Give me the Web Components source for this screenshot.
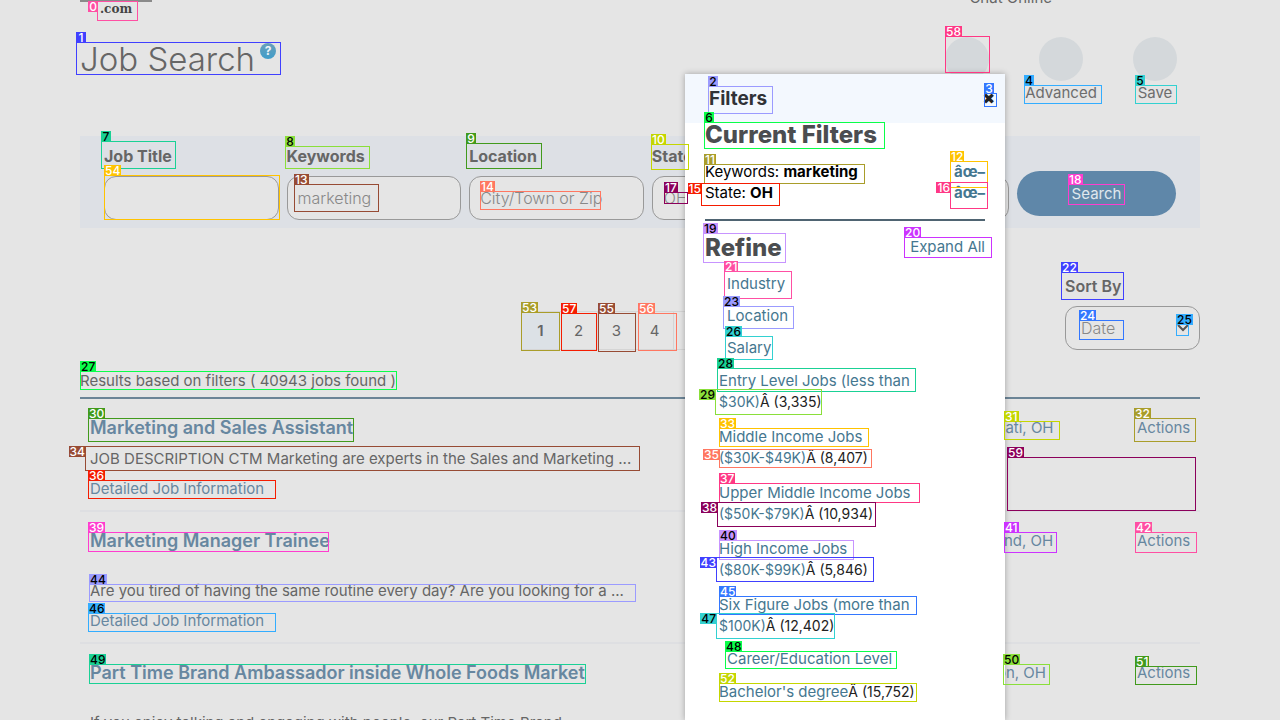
<!DOCTYPE html>
<html lang="en">
<head>
<meta charset="utf-8">
<title>Job Search</title>
<style>
body { margin: 0; background: #e5e5e5; font-family: Inter, "Open Sans", sans-serif; font-size: 14px; line-height: 20px; color: #666; }
</style>
</head>
<body>
<job-page>
  <site-top></site-top>
  <page-title>
    <action-link></action-link>
    <action-link>Advanced</action-link>
    <action-link>Save</action-link>
  </page-title>
  <search-panel></search-panel>
  <results-toolbar></results-toolbar>
  <job-results></job-results>
  <filter-drawer slot="overlay"></filter-drawer>
  <mark-layer slot="overlay" aria-hidden="true"></mark-layer>
</job-page>
<script>
const define = (name, html, setup) => {
  const template = document.createElement('template');
  template.innerHTML = html;
  customElements.define(name, class extends HTMLElement {
    constructor() {
      super();
      const root = this.attachShadow({ mode: 'open' });
      root.append(template.content.cloneNode(true));
      if (setup) setup(root);
    }
  });
};

define('job-page', `
<style>
:host { display: block; position: relative; height: 100vh; overflow: hidden; }
main { max-width: 1120px; margin: 0 auto; }
</style>
<main><slot></slot></main>
<slot name="overlay"></slot>`);

define('site-top', `
<style>
:host { display: flex; justify-content: space-between; align-items: flex-start; height: 37px; }
.logo { width: 72px; border-top: 2px solid #8a8a8a; text-align: center; color: #444; text-decoration: none; font: bold 12px/14px "DejaVu Serif", serif; }
.chat { color: #666; text-decoration: none; font-size: 15px; margin: -12px 148px 0 0; }
</style>
<a class="logo" href="#">.com</a>
<a class="chat" href="#">Chat Online</a>`);

define('page-title', `
<style>
:host { display: flex; justify-content: space-between; height: 99px; }
h1 { display: flex; align-items: flex-start; gap: 5px; margin: 0; height: 44px; font-size: 33px; font-weight: 300; line-height: 44px; color: #666; }
button { width: 16px; height: 16px; margin-top: 6px; padding: 0; border: 0; border-radius: 50%; background: linear-gradient(#6a9fb8, #3f9dcb); color: #eef4f8; font: bold 12px/16px Inter, sans-serif; }
nav { display: flex; }
</style>
<h1>Job Search<button type="button" aria-label="Help">?</button></h1>
<nav><slot></slot></nav>`);

define('action-link', `
<style>
:host { display: block; width: 94px; }
:host(:last-child) { margin-right: -2px; }
a { display: flex; flex-direction: column; align-items: center; gap: 2px; color: #6d6d6d; text-decoration: none; font-size: 15px; }
i { width: 44px; height: 44px; border-radius: 50%; background: #d4d8db; }
</style>
<a href="#"><i></i><slot></slot></a>`);

define('select-box', `
<style>
:host { display: block; }
label { display: block; color: #666; font-size: 16px; font-weight: 700; line-height: 24px; margin-bottom: 8px; }
div { display: grid; align-items: center; }
select, svg { grid-area: 1 / 1; }
select { appearance: none; box-sizing: border-box; width: 100%; height: 44px; padding: 0 11px; border: 1px solid #999; border-radius: 12px; background: #e5e5e5; color: #888; font: 300 16px Inter, sans-serif; }
:host([wide]) select { padding: 0 15px; }
:host([wide]) label { font-weight: 600; }
svg { justify-self: end; margin-right: 11px; pointer-events: none; }
</style>
<label for="choice"></label>
<div><select id="choice"></select>
<svg width="12" height="8" viewBox="0 0 12 8" fill="none" stroke="#555" stroke-width="2"><path d="M1 1l5 5 5-5"/></svg></div>`,
(root) => {
  const host = root.host;
  queueMicrotask(() => {
    root.querySelector('select').add(new Option(host.getAttribute('value')));
    root.querySelector('label').textContent = host.getAttribute('label');
  });
});

define('search-panel', `
<style>
:host { display: block; background: #dde0e5; }
form { display: grid; grid-template-columns: repeat(5, minmax(0, 1fr)) 159px; gap: 8px; align-items: end; padding: 8px 24px; }
label { display: block; color: #666; font-size: 16px; font-weight: 700; line-height: 24px; margin-bottom: 8px; }
input { box-sizing: border-box; width: 100%; height: 44px; display: block; padding: 0 10px; border: 1px solid #999; border-radius: 12px; background: #e5e5e5; color: #888; font: 300 16px Inter, sans-serif; }
input::placeholder { color: #888; }
button { height: 45px; margin-bottom: 4px; border: 0; border-radius: 23px; background: #5f87a9; color: #e0e8ee; font: 15px Inter, sans-serif; }
</style>
<form>
  <div><label for="title">Job Title</label><input id="title"></div>
  <div><label for="keys">Keywords</label><input id="keys" value="marketing"></div>
  <div><label for="place">Location</label><input id="place" placeholder="City/Town or Zip"></div>
  <select-box label="State" value="OH"></select-box>
  <select-box label="Radius" value="25"></select-box>
  <button type="button">Search</button>
</form>`);

define('results-toolbar', `
<style>
:host { display: block; padding-top: 46px; }
.bar { display: grid; grid-template-columns: 1fr auto 1fr; align-items: end; }
nav { grid-column: 2; display: flex; border: 1px solid #d5d5d5; box-sizing: border-box; height: 39px; }
nav a { box-sizing: border-box; width: 38px; border-right: 1px solid #d5d5d5; color: #666; font-size: 15px; line-height: 37px; text-align: center; text-decoration: none; }
nav a:last-child { border: 0; width: 46px; }
nav a[aria-current] { background: #dce1e6; font-weight: 600; }
select-box { justify-self: end; width: 135px; }
p { margin: 21px 0 6px; font-size: 15px; line-height: 20px; }
</style>
<div class="bar">
  <nav><a href="#" aria-current="page">1</a><a href="#">2</a><a href="#">3</a><a href="#">4</a><a href="#">5</a><a href="#">›</a></nav>
  <select-box wide label="Sort By" value="Date"></select-box>
</div>
<p>Results based on filters ( 40943 jobs found )</p>`);

const jobs = [
  ['Marketing and Sales Assistant', 'CTM', 'Cincinnati, OH', 'JOB DESCRIPTION CTM Marketing are experts in the Sales and Marketing ...'],
  ['Marketing Manager Trainee', 'Ohio<br>Group', 'Cleveland, OH', 'Are you tired of having the same routine every day? Are you looking for a ...'],
  ['Part Time Brand Ambassador inside Whole Foods Market', 'Whole<br>Foods', 'Hamilton, OH', 'If you enjoy talking and engaging with people, our Part Time Brand ...'],
];
define('job-results', `
<style>
:host { display: block; border-top: 2px solid #6b8496; }
table { width: 100%; border-collapse: collapse; table-layout: fixed; font-size: 15px; line-height: 20px; }
col.company { width: 144px; } col.place { width: 185px; } col.act { width: 73px; }
tbody { border-bottom: 2px solid #dedfe2; }
td { padding: 19px 0 0 10px; vertical-align: top; white-space: nowrap; }
.more td { padding: 10px 10px 11px; }
a { color: #6787a0; text-decoration: none; }
.title { font-size: 18px; font-weight: 600; }
p { margin: 0 0 10px; }
</style>
<table><colgroup><col><col class="company"><col class="place"><col class="act"></colgroup></table>`,
(root) => {
  root.querySelector('table').insertAdjacentHTML('beforeend', jobs.map(([title, company, place, text]) => `
<tbody><tr><td><a class="title" href="#">${title}</a></td><td>${company}</td><td><a href="#">${place}</a></td><td><a href="#">Actions</a></td></tr>
<tr class="more"><td colspan="4"><p>${text}</p><a href="#">Detailed Job Information</a></td></tr></tbody>`).join(''));
});

define('filter-drawer', `
<style>
:host { display: block; position: absolute; left: calc(50% + 45px); top: 74px; bottom: 0; width: 320px; background: #fff; box-shadow: 0 0 6px rgba(0,0,0,.3); color: #222; font-size: 15px; line-height: 21px; }
header { display: flex; justify-content: space-between; align-items: center; height: 49px; padding: 0 10px 0 24px; background: #f3f8fe; }
header button { padding: 0; border: 0; background: none; color: #222; font: bold 15px/16px "DejaVu Sans", sans-serif; }
h2 { margin: 0; font-size: 24px; font-weight: 800; line-height: 24px; color: #4b4d50; }
header h2 { color: #303236; font-size: 19px; font-weight: 700; }
.body { padding: 0 20px; }
.row { display: flex; justify-content: space-between; color: #000; }
.current { margin: 14px 0 16px; }
a { color: #457790; text-decoration: none; }
.row a { font-weight: 700; }
hr { margin: 0; border: 0; border-top: 2px solid #4f6472; }
.refine { display: flex; justify-content: space-between; align-items: flex-start; padding: 15px 0 8px; height: 24px; }
.group { display: block; padding-left: 22px; line-height: 32px; }
ul { list-style: none; margin: 6px 0 7px; padding: 0 66px 0 14px; display: grid; gap: 14px; white-space: nowrap; }
small { font-size: 14px; }
</style>
<header><h2>Filters</h2><button type="button" aria-label="Close">✖</button></header>
<div class="body">
  <h2>Current Filters</h2>
  <div class="current">
    <div class="row"><span>Keywords: <b>marketing</b></span><a href="#">âœ–</a></div>
    <div class="row"><span>State: <b>OH</b></span><a href="#">âœ–</a></div>
  </div>
  <hr>
  <div class="refine"><h2>Refine</h2><a href="#">Expand All</a></div>
  <a class="group" href="#">Industry</a>
  <a class="group" href="#">Location</a>
  <a class="group" href="#">Salary</a>
  <ul>
    <li><a href="#">Entry Level Jobs (less than<br><small>$30K)</small></a><small>Â (3,335)</small></li>
    <li><a href="#">Middle Income Jobs<br><small>($30K-$49K)</small></a><small>Â (8,407)</small></li>
    <li><a href="#">Upper Middle Income Jobs<br><small>($50K-$79K)</small></a><small>Â (10,934)</small></li>
    <li><a href="#">High Income Jobs<br><small>($80K-$99K)</small></a><small>Â (5,846)</small></li>
    <li><a href="#">Six Figure Jobs (more than<br><small>$100K)</small></a><small>Â (12,402)</small></li>
  </ul>
  <a class="group" href="#">Career/Education Level</a>
  <ul><li><a href="#">Bachelor's degree</a><small>Â (15,752)</small></li></ul>
</div>`);

// Each mark: left, top, width, height and, when 1, a tag at the left side of the box.
const marks = [
  [97,1,41,20,1],[76,42,205,33],[708,86,65,28],[984,93,13,14],[1024,85,78,19],[1135,85,42,19],
  [704,122,181,27],[101,141,75,28],[285,146,85,23],[466,143,76,26],[651,144,38,26],[704,164,161,20],
  [950,161,38,27],[294,184,85,28],[480,191,121,19],[701,183,79,23,1],[950,182,38,27,1],[664,192,24,12],
  [1068,184,57,21],[703,233,83,30],[904,237,88,21],[724,271,68,28],[1061,272,63,28],[723,306,71,23],
  [1079,320,45,20],[1176,324,13,12],[725,336,48,24],[80,371,317,19],[717,368,199,24],[715,389,107,26,1],
  [88,418,266,24],[1004,421,56,19],[1134,418,62,24],[719,428,150,19],[85,446,555,25,1],[719,449,153,19,1],
  [88,480,188,19],[719,483,201,20],[717,502,159,25,1],[88,532,241,20],[719,540,135,20],[1004,532,53,21],
  [1135,532,62,21],[716,557,158,25,1],[89,584,547,18],[719,596,198,19],[88,613,188,19],[716,613,119,26,1],
  [725,651,172,18],[89,664,497,20],[1003,664,47,21],[1135,666,62,19],[719,683,198,19],[521,312,39,39],
  [104,175,176,45],[598,313,38,39],[638,313,39,38],[561,313,36,38],[945,36,45,37],[1007,457,189,54],
];
const palette = ['#ff4fa3','#4040ff','#9b9bff','#3377ff','#33adff','#33d1d1','#0aff4a','#1ad195','#8adf3a','#419a1c','#c4d600','#a99d2a','#ffc300','#974b34','#ff7761','#f51c00','#ff3885','#8b005b','#ff3dcf','#c794ff','#cc33ff'];
const darkText = [2, 4, 5, 6, 7, 8, 19];
define('mark-layer', `
<style>
:host { display: block; position: absolute; inset: 0; pointer-events: none; }
div { position: absolute; box-sizing: border-box; border: 1px solid var(--c); }
span { position: absolute; left: -1px; bottom: 100%; min-width: 10px; height: 11px; box-sizing: border-box; padding: 0 1px; background: var(--c); color: var(--t); font: 500 12px/11px Inter, sans-serif; text-align: center; }
.side span { left: auto; right: 100%; top: -1px; bottom: auto; }
</style>`,
(root) => {
  marks.forEach(([x, y, w, h, side], n) => {
    const box = document.createElement('div');
    const k = n % palette.length;
    box.style.cssText = `left:${x}px;top:${y}px;width:${w}px;height:${h}px;--c:${palette[k]};--t:${darkText.includes(k) ? '#000' : '#fff'}`;
    if (side) box.className = 'side';
    const tag = document.createElement('span');
    tag.textContent = n;
    box.append(tag);
    root.append(box);
  });
});
</script>
</body>
</html>
